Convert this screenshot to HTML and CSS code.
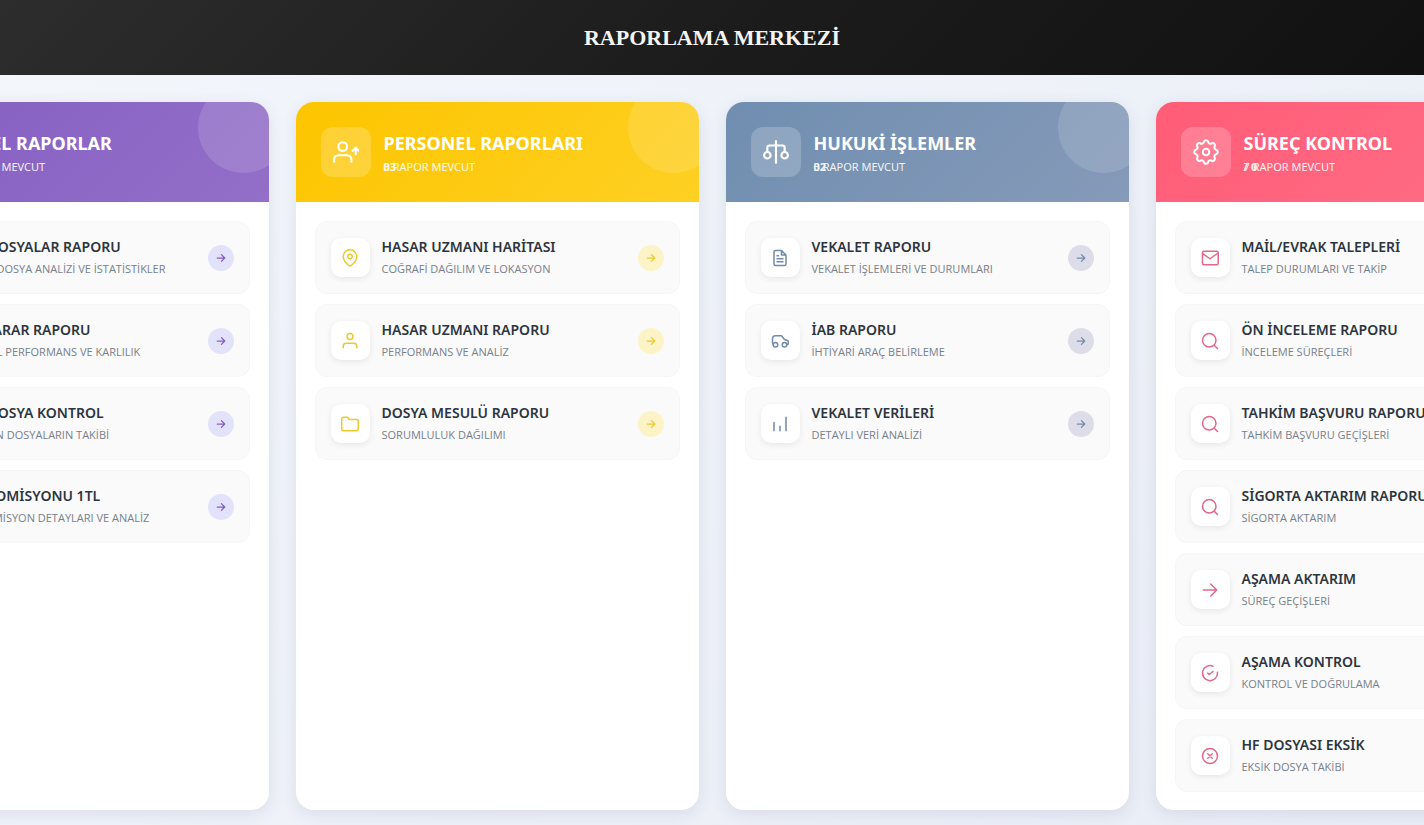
FILE: index.html
```html
<!DOCTYPE html>
<html lang="tr">
<head>
  <meta charset="UTF-8">
  <meta name="viewport" content="width=device-width, initial-scale=1.0">
  <title>Raporlama Merkezi</title>
  <link rel="stylesheet" href="styles.css">
</head>
<body>
  <!-- shared icon shapes -->
  <svg class="sprite" aria-hidden="true">
    <symbol id="i-arrow" viewBox="0 0 24 24"><path d="M3 12h18M13 4l8 8-8 8"/></symbol>
    <symbol id="i-doc" viewBox="0 0 24 24"><path d="M14 2H6a2 2 0 0 0-2 2v16a2 2 0 0 0 2 2h12a2 2 0 0 0 2-2V8zM14 2v6h6M8 9h2M8 13h8M8 17h8"/></symbol>
    <symbol id="i-pin" viewBox="0 0 24 24"><path d="M21 10c0 7-9 13-9 13s-9-6-9-13a9 9 0 0 1 18 0z"/><circle cx="12" cy="10" r="3"/></symbol>
    <symbol id="i-user" viewBox="0 0 24 24"><path d="M21 21v-2a4 4 0 0 0-4-4H7a4 4 0 0 0-4 4v2"/><circle cx="12" cy="6" r="4"/></symbol>
    <symbol id="i-folder" viewBox="0 0 24 24"><path d="M23 19a2 2 0 0 1-2 2H3a2 2 0 0 1-2-2V5a2 2 0 0 1 2-2h6l2 3h10a2 2 0 0 1 2 2z"/></symbol>
    <symbol id="i-userplus" viewBox="0 0 24 24"><path d="M17 21v-2a4 4 0 0 0-4-4H5a4 4 0 0 0-4 4v2M21 8v6M18 11l3-3 3 3"/><circle cx="9" cy="7" r="4"/></symbol>
    <symbol id="i-scale" viewBox="0 0 24 24"><path d="M12 2v20M4 12V8a2 2 0 0 1 2-2h12a2 2 0 0 1 2 2v4"/><circle cx="4" cy="15" r="3"/><circle cx="20" cy="15" r="3"/></symbol>
    <symbol id="i-car" viewBox="0 0 24 24"><path d="M3 17l-1-3V9a4 4 0 0 1 4-4h8l4 5 3 1a2 2 0 0 1 2 2v3l-2 1"/><circle cx="6" cy="17" r="3"/><circle cx="18" cy="17" r="3"/></symbol>
    <symbol id="i-bars" viewBox="0 0 24 24"><path d="M4 21V10M12 21v-6M20 21V3"/></symbol>
    <symbol id="i-gear" viewBox="2 2 20 20"><path d="M10.300 4.300c.4-1.800 3-1.800 3.400 0a1.700 1.700 0 0 0 2.600 1.100c1.500-.9 3.300.8 2.400 2.400a1.700 1.700 0 0 0 1 2.500c1.800.4 1.800 3 0 3.400a1.700 1.700 0 0 0-1 2.600c.9 1.500-.8 3.300-2.400 2.400a1.700 1.700 0 0 0-2.600 1c-.4 1.800-3 1.800-3.400 0a1.700 1.700 0 0 0-2.600-1c-1.500.9-3.300-.8-2.400-2.400a1.700 1.700 0 0 0-1-2.600c-1.800-.4-1.800-3 0-3.400a1.700 1.700 0 0 0 1-2.500c-.9-1.600.8-3.300 2.400-2.400a1.700 1.700 0 0 0 2.600-1.100z" stroke-width="1.600"/><circle cx="12" cy="12" r="2.500" stroke-width="1.600"/></symbol>
    <symbol id="i-mail" viewBox="0 0 24 24"><rect x="2" y="3" width="21" height="18" rx="2"/><path d="M2 6l10 7 10-7"/></symbol>
    <symbol id="i-search" viewBox="0 0 24 24"><circle cx="11" cy="11" r="9"/><path d="M22 22l-4-4"/></symbol>
    <symbol id="i-check" viewBox="0 0 24 24"><path d="M22 11v1a10 10 0 1 1-6-9M9 12l2 2 5-4"/></symbol>
    <symbol id="i-x" viewBox="0 0 24 24"><circle cx="12" cy="12" r="10"/><path d="M15 9l-6 6M9 9l6 6"/></symbol>
  </svg>

  <header class="topbar">
    <h1>RAPORLAMA MERKEZİ</h1>
  </header>

  <main class="board">
    <section class="card purple">
      <div class="card-header">
        <span class="card-icon"><svg><use href="#i-doc"/></svg></span>
        <div class="card-title">
          <h2>GENEL RAPORLAR</h2>
          <p class="count"><span class="ticker">04</span>4 RAPOR MEVCUT</p>
        </div>
      </div>
      <nav class="reports">
        <a class="report" href="#">
          <span class="icon"><svg><use href="#i-folder"/></svg></span>
          <span class="text"><strong>AÇIK DOSYALAR RAPORU</strong><small>DETAYLI DOSYA ANALİZİ VE İSTATİSTİKLER</small></span>
          <span class="go"><svg><use href="#i-arrow"/></svg></span>
        </a>
        <a class="report" href="#">
          <span class="icon"><svg><use href="#i-bars"/></svg></span>
          <span class="text"><strong>KAR/ZARAR RAPORU</strong><small>FİNANSAL PERFORMANS VE KARLILIK</small></span>
          <span class="go"><svg><use href="#i-arrow"/></svg></span>
        </a>
        <a class="report" href="#">
          <span class="icon"><svg><use href="#i-check"/></svg></span>
          <span class="text"><strong>AÇIK DOSYA KONTROL</strong><small>BEKLEYEN DOSYALARIN TAKİBİ</small></span>
          <span class="go"><svg><use href="#i-arrow"/></svg></span>
        </a>
        <a class="report" href="#">
          <span class="icon"><svg><use href="#i-doc"/></svg></span>
          <span class="text"><strong>BAYİ KOMİSYONU 1TL</strong><small>BAYİ KOMİSYON DETAYLARI VE ANALİZ</small></span>
          <span class="go"><svg><use href="#i-arrow"/></svg></span>
        </a>
      </nav>
    </section>

    <section class="card yellow">
      <div class="card-header">
        <span class="card-icon"><svg><use href="#i-userplus"/></svg></span>
        <div class="card-title">
          <h2>PERSONEL RAPORLARI</h2>
          <p class="count"><span class="ticker">03</span>3 RAPOR MEVCUT</p>
        </div>
      </div>
      <nav class="reports">
        <a class="report" href="#">
          <span class="icon"><svg><use href="#i-pin"/></svg></span>
          <span class="text"><strong>HASAR UZMANI HARİTASI</strong><small>COĞRAFİ DAĞILIM VE LOKASYON</small></span>
          <span class="go"><svg><use href="#i-arrow"/></svg></span>
        </a>
        <a class="report" href="#">
          <span class="icon"><svg><use href="#i-user"/></svg></span>
          <span class="text"><strong>HASAR UZMANI RAPORU</strong><small>PERFORMANS VE ANALİZ</small></span>
          <span class="go"><svg><use href="#i-arrow"/></svg></span>
        </a>
        <a class="report" href="#">
          <span class="icon"><svg><use href="#i-folder"/></svg></span>
          <span class="text"><strong>DOSYA MESULÜ RAPORU</strong><small>SORUMLULUK DAĞILIMI</small></span>
          <span class="go"><svg><use href="#i-arrow"/></svg></span>
        </a>
      </nav>
    </section>

    <section class="card blue">
      <div class="card-header">
        <span class="card-icon"><svg><use href="#i-scale"/></svg></span>
        <div class="card-title">
          <h2>HUKUKİ İŞLEMLER</h2>
          <p class="count"><span class="ticker">02</span>3 RAPOR MEVCUT</p>
        </div>
      </div>
      <nav class="reports">
        <a class="report" href="#">
          <span class="icon"><svg><use href="#i-doc"/></svg></span>
          <span class="text"><strong>VEKALET RAPORU</strong><small>VEKALET İŞLEMLERİ VE DURUMLARI</small></span>
          <span class="go"><svg><use href="#i-arrow"/></svg></span>
        </a>
        <a class="report" href="#">
          <span class="icon"><svg><use href="#i-car"/></svg></span>
          <span class="text"><strong>İAB RAPORU</strong><small>İHTİYARİ ARAÇ BELİRLEME</small></span>
          <span class="go"><svg><use href="#i-arrow"/></svg></span>
        </a>
        <a class="report" href="#">
          <span class="icon"><svg><use href="#i-bars"/></svg></span>
          <span class="text"><strong>VEKALET VERİLERİ</strong><small>DETAYLI VERİ ANALİZİ</small></span>
          <span class="go"><svg><use href="#i-arrow"/></svg></span>
        </a>
      </nav>
    </section>

    <section class="card red">
      <div class="card-header">
        <span class="card-icon"><svg><use href="#i-gear"/></svg></span>
        <div class="card-title">
          <h2>SÜREÇ KONTROL</h2>
          <p class="count"><span class="ticker">/ 0</span>7 RAPOR MEVCUT</p>
        </div>
      </div>
      <nav class="reports">
        <a class="report" href="#">
          <span class="icon"><svg><use href="#i-mail"/></svg></span>
          <span class="text"><strong>MAİL/EVRAK TALEPLERİ</strong><small>TALEP DURUMLARI VE TAKİP</small></span>
          <span class="go"><svg><use href="#i-arrow"/></svg></span>
        </a>
        <a class="report" href="#">
          <span class="icon"><svg><use href="#i-search"/></svg></span>
          <span class="text"><strong>ÖN İNCELEME RAPORU</strong><small>İNCELEME SÜREÇLERİ</small></span>
          <span class="go"><svg><use href="#i-arrow"/></svg></span>
        </a>
        <a class="report" href="#">
          <span class="icon"><svg><use href="#i-search"/></svg></span>
          <span class="text"><strong>TAHKİM BAŞVURU RAPORU</strong><small>TAHKİM BAŞVURU GEÇİŞLERİ</small></span>
          <span class="go"><svg><use href="#i-arrow"/></svg></span>
        </a>
        <a class="report" href="#">
          <span class="icon"><svg><use href="#i-search"/></svg></span>
          <span class="text"><strong>SİGORTA AKTARIM RAPORU</strong><small>SİGORTA AKTARIM</small></span>
          <span class="go"><svg><use href="#i-arrow"/></svg></span>
        </a>
        <a class="report" href="#">
          <span class="icon"><svg><use href="#i-arrow"/></svg></span>
          <span class="text"><strong>AŞAMA AKTARIM</strong><small>SÜREÇ GEÇİŞLERİ</small></span>
          <span class="go"><svg><use href="#i-arrow"/></svg></span>
        </a>
        <a class="report" href="#">
          <span class="icon"><svg><use href="#i-check"/></svg></span>
          <span class="text"><strong>AŞAMA KONTROL</strong><small>KONTROL VE DOĞRULAMA</small></span>
          <span class="go"><svg><use href="#i-arrow"/></svg></span>
        </a>
        <a class="report" href="#">
          <span class="icon"><svg><use href="#i-x"/></svg></span>
          <span class="text"><strong>HF DOSYASI EKSİK</strong><small>EKSİK DOSYA TAKİBİ</small></span>
          <span class="go"><svg><use href="#i-arrow"/></svg></span>
        </a>
      </nav>
    </section>
  </main>
</body>
</html>
```
FILE: styles.css
```css
* {
  box-sizing: border-box;
}

body {
  margin: 0;
  min-height: 100vh;
  overflow: hidden;
  background: linear-gradient(135deg, #f3f6fb, #e9edf6);
  font-family: "Segoe UI", "Noto Sans", "Open Sans", sans-serif;
  color: #2d3540;
}

h1, h2, p {
  margin: 0;
}

svg {
  display: block;
  fill: none;
  stroke: currentColor;
  stroke-width: 2;
  stroke-linecap: round;
  stroke-linejoin: round;
}

.sprite {
  display: none;
}

.topbar {
  padding: 24px 24px 23px;
  background: linear-gradient(135deg, #2d2d2d, #1c1c1c 50%, #111);
  color: #f4f4f4;
  text-align: center;
}

.topbar h1 {
  font-family: "Liberation Serif", serif;
  font-size: 22px;
  line-height: 28px;
}

.board {
  display: flex;
  justify-content: center;
  gap: 27px;
  padding: 27px 0 14px;
}

.card {
  flex: 0 0 403px;
  overflow: hidden;
  border-radius: 18px;
  background: #fff;
  box-shadow: 0 4px 16px rgba(60, 80, 130, 0.12);
}

.card-header {
  position: relative;
  display: flex;
  align-items: center;
  gap: 13px;
  height: 100px;
  padding: 0 25px;
  overflow: hidden;
  color: #fff;
}

.card-header::after {
  content: "";
  position: absolute;
  top: -20px;
  right: -20px;
  width: 91px;
  height: 91px;
  border-radius: 50%;
  background: rgba(255, 255, 255, 0.13);
}

.card-icon {
  display: grid;
  place-items: center;
  width: 50px;
  height: 50px;
  border-radius: 12px;
  background: rgba(255, 255, 255, 0.2);
}

.card-icon svg {
  width: 26px;
  height: 26px;
}

.card-title {
  padding-top: 3px;
}

.card-header h2 {
  font-size: 18px;
  line-height: 26px;
}

.count {
  position: relative;
  font-size: 11px;
  line-height: 22px;
  opacity: 0.9;
}

.ticker {
  position: absolute;
  left: 0;
  font-weight: 700;
}

.reports {
  display: flex;
  flex-direction: column;
  gap: 10px;
  padding: 19px 19px 18px;
}

.report {
  display: flex;
  align-items: center;
  gap: 12px;
  height: 73px;
  padding: 0 15px;
  border: 1px solid #f6f6f7;
  border-radius: 12px;
  background: #fafafa;
  color: inherit;
  text-decoration: none;
}

.icon {
  display: grid;
  place-items: center;
  width: 39px;
  height: 39px;
  border-radius: 10px;
  background: #fff;
  box-shadow: 0 2px 6px rgba(0, 0, 0, 0.08);
}

.icon svg {
  width: 18px;
  height: 18px;
}

.text {
  flex: 1;
  white-space: nowrap;
}

.text strong,
.text small {
  display: block;
}

.text strong {
  font-size: 14px;
  line-height: 22px;
  font-weight: 600;
}

.text small {
  font-family: "Segoe UI", "Open Sans", "Noto Sans", sans-serif;
  font-size: 11px;
  line-height: 22px;
  color: #77808c;
}

.go {
  display: grid;
  place-items: center;
  width: 26px;
  height: 26px;
  border-radius: 50%;
}

.go svg {
  width: 10px;
  height: 10px;
  stroke-width: 3;
}

.purple .card-header {
  background: linear-gradient(135deg, #845ec2, #936fc8);
}

.purple .icon,
.purple .go {
  color: #845ec2;
}

.purple .go {
  background: #e3e2fb;
}

.yellow .card-header {
  background: linear-gradient(135deg, #fdc500, #fdd023);
}

.yellow .icon,
.yellow .go {
  color: #ecc92e;
}

.yellow .go {
  background: #fcf4c6;
}

.blue .card-header {
  background: linear-gradient(135deg, #708eb0, #869ab9);
}

.blue .icon,
.blue .go {
  color: #738baa;
}

.blue .go {
  background: #dddde9;
}

.red .card-header {
  background: linear-gradient(135deg, #ff5c77, #ff6f87);
}

.red .icon,
.red .go {
  color: #e2688a;
}

.red .go {
  background: #fde0e6;
}
```
